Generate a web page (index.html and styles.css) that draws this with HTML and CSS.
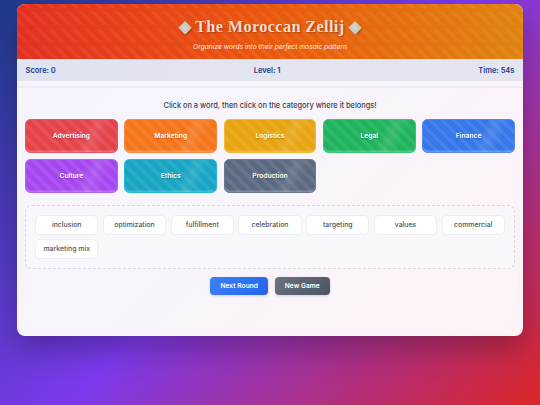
FILE: index.html
```html
<!DOCTYPE html>
<html lang="en">
<head>
<meta charset="utf-8">
<title>The Moroccan Zellij</title>
<link rel="stylesheet" href="styles.css">
</head>
<body>
<div class="card">
  <header class="header">
    <h1 class="title"><span class="gem">◈</span> The Moroccan Zellij <span class="gem">◈</span></h1>
    <p class="subtitle">Organize words into their perfect mosaic pattern</p>
  </header>
  <div class="stats">
    <span>Score: 0</span>
    <span>Level: 1</span>
    <span>Time: 54s</span>
  </div>
  <div class="rule"></div>
  <main class="main">
    <p class="hint">Click on a word, then click on the category where it belongs!</p>
    <div class="cats">
      <div class="cat red">Advertising</div>
      <div class="cat orange">Marketing</div>
      <div class="cat amber">Logistics</div>
      <div class="cat green">Legal</div>
      <div class="cat blue">Finance</div>
      <div class="cat purple">Culture</div>
      <div class="cat cyan">Ethics</div>
      <div class="cat slate">Production</div>
    </div>
    <div class="bank">
      <div class="chip">inclusion</div>
      <div class="chip">optimization</div>
      <div class="chip">fulfillment</div>
      <div class="chip">celebration</div>
      <div class="chip">targeting</div>
      <div class="chip">values</div>
      <div class="chip">commercial</div>
      <div class="chip">marketing mix</div>
    </div>
    <div class="actions">
      <button class="btn next">Next Round</button>
      <button class="btn newgame">New Game</button>
    </div>
  </main>
</div>
</body>
</html>
```
FILE: styles.css
```css
* { box-sizing: border-box; }
html, body { height: 100%; }
body {
  margin: 0;
  padding: 4px 17px 0;
  overflow: hidden;
  font-family: Inter, "Liberation Sans", sans-serif;
  background: linear-gradient(135deg, #1e3a8a 0%, #7c3aed 50%, #dc2626 100%);
}
.card {
  height: 332px;
  border-radius: 8px;
  overflow: hidden;
  background: linear-gradient(135deg, #f4f5ff 0%, #fdf3f7 100%);
  box-shadow: 0 14px 28px rgba(0, 0, 0, 0.25);
}
.header {
  position: relative;
  height: 55px;
  padding-top: 11px;
  text-align: center;
  color: #fff;
  background: linear-gradient(90deg, #e42f22 0%, #ea580c 50%, #df8410 100%);
}
.header::before {
  content: "";
  position: absolute;
  inset: 0;
  background: repeating-linear-gradient(45deg, rgba(255,255,255,0.06) 0 3.5px, transparent 3.5px 8.5px);
  -webkit-mask-image: repeating-linear-gradient(0deg, #000 0 13px, rgba(0,0,0,0.35) 13px 17px);
  mask-image: repeating-linear-gradient(0deg, #000 0 13px, rgba(0,0,0,0.35) 13px 17px);
}
.title {
  position: relative;
  margin: 0;
  font: 700 16.2px/24px "Liberation Serif", serif;
  letter-spacing: 0.4px;
  color: #eedcd0;
  text-shadow: 1px 1px 2px rgba(0, 0, 0, 0.3);
}
.gem { color: #d4d1ce; }
.subtitle {
  position: relative;
  margin: 2.5px 0 0;
  font-size: 6.7px;
  line-height: 11px;
  font-style: italic;
  color: #fbe9dc;
}
.stats {
  height: 22px;
  padding: 0 8.5px;
  display: flex;
  justify-content: space-between;
  align-items: center;
  font-size: 7.5px;
  font-weight: 600;
  color: #1e3a8a;
  background: linear-gradient(90deg, #e0e3f0, #e5e5f1);
}
.rule {
  height: 7px;
  border-bottom: 2px solid #ececf2;
}
.main { padding: 12px 8px 0; }
.hint {
  margin: 0;
  text-align: center;
  font-size: 7.4px;
  font-weight: 500;
  line-height: 12px;
  color: #374151;
}
.cats {
  margin-top: 7px;
  display: grid;
  grid-template-columns: repeat(5, 1fr);
  grid-auto-rows: 33.5px;
  gap: 6.5px;
}
.cat {
  display: flex;
  align-items: center;
  justify-content: center;
  border-radius: 5.5px;
  font-size: 6.7px;
  font-weight: 600;
  color: #fff;
  text-shadow: 0 0.5px 1px rgba(0,0,0,0.25);
  background-image:
    linear-gradient(115deg, transparent 60%, rgba(255,255,255,0.1) 70%, transparent 82%),
    repeating-linear-gradient(45deg, rgba(255,255,255,0.08) 0 4px, transparent 4px 8.5px);
  box-shadow: inset 0 -1.5px 0 rgba(255,255,255,0.2);
}
.red { background-color: #e4434a; border: 1px solid #e9555b; }
.orange { background-color: #f6741a; border: 1px solid #f98c3c; }
.amber { background-color: #e8a40f; border: 1px solid #f2bb33; }
.green { background-color: #20b35e; border: 1px solid #33c673; }
.blue { background-color: #3577ea; border: 1px solid #5089ef; }
.purple { background-color: #a648f0; border: 1px solid #b362f5; }
.cyan { background-color: #16a5c4; border: 1px solid #22bad9; }
.slate { background-color: #5b6980; border: 1px solid #6b788f; }
.bank {
  margin-top: 12px;
  height: 64px;
  padding: 9px;
  display: grid;
  grid-template-columns: repeat(7, 1fr);
  grid-auto-rows: 20px;
  gap: 4px 4.3px;
  align-content: start;
  border: 1px dashed #d5d8e1;
  border-radius: 7px;
  background: rgba(248, 250, 252, 0.55);
}
.chip {
  display: flex;
  align-items: center;
  justify-content: center;
  background: #fff;
  border: 1px solid #eceef2;
  border-radius: 5px;
  font-size: 6.9px;
  font-weight: 500;
  color: #4b5563;
  white-space: nowrap;
}
.actions {
  margin-top: 8px;
  display: flex;
  justify-content: center;
  gap: 6.5px;
}
.btn {
  height: 18px;
  padding: 0;
  border: 0;
  border-radius: 4px;
  font-family: inherit;
  font-size: 6.7px;
  font-weight: 600;
  color: #fff;
  box-shadow: 0 1px 3px rgba(0,0,0,0.15);
}
.next { width: 58px; background: linear-gradient(135deg, #3b82f6, #2563eb); }
.newgame { width: 55px; background: linear-gradient(135deg, #6b7280, #4b5563); }
```
